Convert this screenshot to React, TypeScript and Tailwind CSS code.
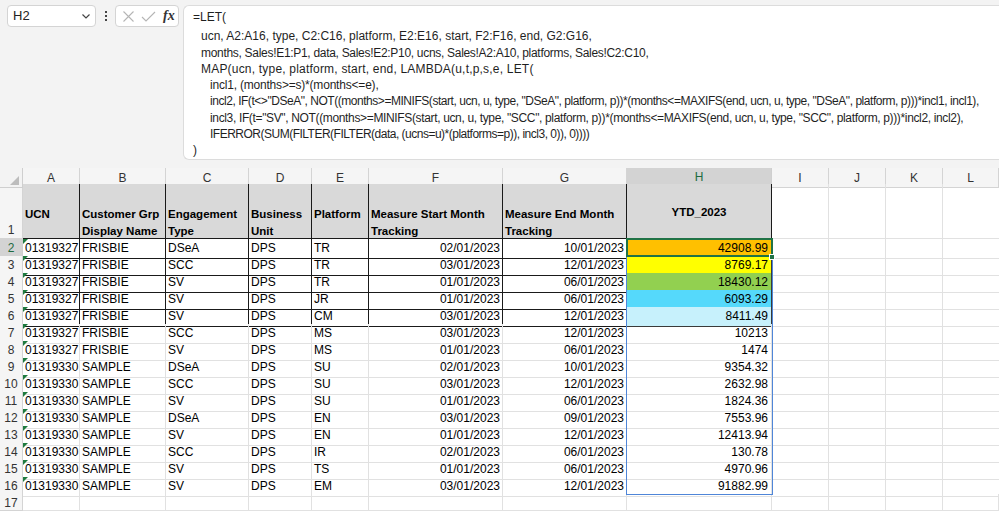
import React from 'react';

const cols = ['A', 'B', 'C', 'D', 'E', 'F', 'G', 'H', 'I', 'J', 'K', 'L'];

const rows = [
    ['01319327', 'FRISBIE', 'DSeA', 'DPS', 'TR', '02/01/2023', '10/01/2023', '42908.99'],
    ['01319327', 'FRISBIE', 'SCC', 'DPS', 'TR', '03/01/2023', '12/01/2023', '8769.17'],
    ['01319327', 'FRISBIE', 'SV', 'DPS', 'TR', '01/01/2023', '06/01/2023', '18430.12'],
    ['01319327', 'FRISBIE', 'SV', 'DPS', 'JR', '01/01/2023', '06/01/2023', '6093.29'],
    ['01319327', 'FRISBIE', 'SV', 'DPS', 'CM', '03/01/2023', '12/01/2023', '8411.49'],
    ['01319327', 'FRISBIE', 'SCC', 'DPS', 'MS', '03/01/2023', '12/01/2023', '10213'],
    ['01319327', 'FRISBIE', 'SV', 'DPS', 'MS', '01/01/2023', '06/01/2023', '1474'],
    ['01319330', 'SAMPLE', 'DSeA', 'DPS', 'SU', '02/01/2023', '10/01/2023', '9354.32'],
    ['01319330', 'SAMPLE', 'SCC', 'DPS', 'SU', '03/01/2023', '12/01/2023', '2632.98'],
    ['01319330', 'SAMPLE', 'SV', 'DPS', 'SU', '01/01/2023', '06/01/2023', '1824.36'],
    ['01319330', 'SAMPLE', 'DSeA', 'DPS', 'EN', '03/01/2023', '09/01/2023', '7553.96'],
    ['01319330', 'SAMPLE', 'SV', 'DPS', 'EN', '01/01/2023', '12/01/2023', '12413.94'],
    ['01319330', 'SAMPLE', 'SCC', 'DPS', 'IR', '02/01/2023', '06/01/2023', '130.78'],
    ['01319330', 'SAMPLE', 'SV', 'DPS', 'TS', '01/01/2023', '06/01/2023', '4970.96'],
    ['01319330', 'SAMPLE', 'SV', 'DPS', 'EM', '03/01/2023', '12/01/2023', '91882.99'],
];

const fills = ['bg-[#ffc000]', 'bg-[#ffff00]', 'bg-[#92d050]', 'bg-[#55d9fb]', 'bg-[#c7f1fc]'];

const headers: [string, string][] = [
    ['UCN', '\u00a0'],
    ['Customer Grp', 'Display Name'],
    ['Engagement', 'Type'],
    ['Business', 'Unit'],
    ['Platform', '\u00a0'],
    ['Measure Start Month', 'Tracking'],
    ['Measure End Month', 'Tracking'],
];

// per-line tracking keeps each line close to the width it has in Excel's font
const formula = [
    { cls: 'pl-0 mb-[3px]', text: '=LET(' },
    { cls: 'pl-2', text: 'ucn, A2:A16, type, C2:C16, platform, E2:E16, start, F2:F16, end, G2:G16,' },
    { cls: 'pl-2 tracking-[-0.3px]', text: 'months, Sales!E1:P1, data, Sales!E2:P10, ucns, Sales!A2:A10, platforms, Sales!C2:C10,' },
    { cls: 'pl-2 tracking-[0.2px]', text: 'MAP(ucn, type, platform, start, end, LAMBDA(u,t,p,s,e, LET(' },
    { cls: 'pl-[17px] tracking-[-0.2px]', text: 'incl1, (months>=s)*(months<=e),' },
    { cls: 'pl-[17px] tracking-[-0.46px]', text: 'incl2, IF(t<>"DSeA", NOT((months>=MINIFS(start, ucn, u, type, "DSeA", platform, p))*(months<=MAXIFS(end, ucn, u, type, "DSeA", platform, p)))*incl1, incl1),' },
    { cls: 'pl-[17px] tracking-[-0.35px]', text: 'incl3, IF(t="SV", NOT((months>=MINIFS(start, ucn, u, type, "SCC", platform, p))*(months<=MAXIFS(end, ucn, u, type, "SCC", platform, p)))*incl2, incl2),' },
    { cls: 'pl-[17px] tracking-[-0.5px]', text: 'IFERROR(SUM(FILTER(FILTER(data, (ucns=u)*(platforms=p)), incl3, 0)), 0))))' },
    { cls: 'pl-0', text: ')' },
];

function FormulaBar() {
    return (
        <div className="h-[168px] bg-[#f3f3f3] flex items-start pt-[5px] pl-[7px] font-['Liberation_Sans',sans-serif]">
            <div className="w-[89px] h-[22px] bg-white border border-[#d4d4d4] rounded-[4px] flex items-center justify-between pl-[5px] pr-[4px] text-[13px] text-[#222]">
                <span>H2</span>
                <svg width="10" height="10" viewBox="0 0 10 10" className="text-[#444]">
                    <path d="M1.5 3.5 L5 7 L8.5 3.5" fill="none" stroke="currentColor" strokeWidth="1.2" />
                </svg>
            </div>
            <div className="w-[19px] h-[22px] flex flex-col items-center justify-center gap-[2px]">
                <span className="w-[2px] h-[2px] bg-[#444]" />
                <span className="w-[2px] h-[2px] bg-[#444]" />
                <span className="w-[2px] h-[2px] bg-[#444]" />
            </div>
            <div className="w-[64px] h-[22px] bg-white border border-[#d4d4d4] rounded-[4px] flex items-center pl-[6px] gap-[6px]">
                <svg width="13" height="13" viewBox="0 0 13 13">
                    <path d="M1.5 1.5 L11.5 11.5 M11.5 1.5 L1.5 11.5" stroke="#b5b5b5" strokeWidth="1.1" />
                </svg>
                <svg width="15" height="13" viewBox="0 0 15 13">
                    <path d="M1 7 L5 11 L14 2" fill="none" stroke="#b5b5b5" strokeWidth="1.1" />
                </svg>
                <span className="font-['Liberation_Serif',serif] italic font-bold text-[14px] text-[#333] leading-none ml-[1px]">fx</span>
            </div>
            <div className="ml-[4px] flex-1 h-[155px] bg-white border border-[#dcdcdc] border-r-0 rounded-l-[6px] pt-[3px] pl-[9px] text-[12px] leading-[16.3px] text-[#1f1f1f] whitespace-nowrap overflow-hidden">
                {formula.map((l, i) => (
                    <div key={i} className={l.cls}>{l.text}</div>
                ))}
            </div>
        </div>
    );
}

function Tri() {
    return <span className="absolute left-0 top-0 w-0 h-0 border-t-[5px] border-t-[#1e7b3f] border-r-[5px] border-r-transparent" />;
}

export default function App() {
    const gridCols = 'grid grid-cols-[23px_57px_86px_83px_63px_57px_134px_124px_145px_57px_57px_57px_56px]';
    return (
        <div className="w-[999px] h-[512px] overflow-hidden bg-white">
            <FormulaBar />
            <div className="relative font-['Liberation_Sans',sans-serif] text-[12px] text-black">
                {/* column letters */}
                <div className={`${gridCols} h-[16px]`}>
                    <div className="relative bg-[#f3f3f3] border-r border-b border-[#cfcfcf]">
                        <span className="absolute right-[3px] bottom-[2px] w-0 h-0 border-l-[9px] border-l-transparent border-b-[9px] border-b-[#bdbdbd]" />
                    </div>
                    {cols.map((c) =>
                        c === 'H' ? (
                            <div key={c} className="bg-[#d3d3d3] border-r border-[#cfcfcf] border-b-2 border-b-[#217346] flex items-center justify-center text-[#1e6b41] text-[12px]">{c}</div>
                        ) : (
                            <div key={c} className="bg-[#f5f5f5] border-r border-b border-[#d4d4d4] flex items-center justify-center text-[#333] text-[12px]">{c}</div>
                        )
                    )}
                </div>
                {/* row 1 headers */}
                <div className={`${gridCols} h-[55px]`}>
                    <div className="bg-[#f5f5f5] border-r border-b border-[#d4d4d4] flex items-end justify-center pb-[1px] text-[#333]">
                        <span className="translate-y-[2px]">1</span>
                    </div>
                    {headers.map(([a, b], i) => (
                        <div key={i} className="bg-[#d9d9d9] border-r border-b border-[#1a1a1a] flex flex-col justify-end pl-[2px] font-bold text-[11.5px] leading-[17px] whitespace-nowrap overflow-hidden">
                            <div className="flex flex-col translate-y-[2px]">
                                <span>{a}</span>
                                <span>{b}</span>
                            </div>
                        </div>
                    ))}
                    <div className="bg-[#d9d9d9] border-r border-b border-[#1a1a1a] flex items-center justify-center font-bold text-[11.5px] pt-[3px]">YTD_2023</div>
                    <div className="border-r border-b border-[#e1e1e1]" />
                    <div className="border-r border-b border-[#e1e1e1]" />
                    <div className="border-r border-b border-[#e1e1e1]" />
                    <div className="border-b border-[#e1e1e1]" />
                </div>
                {/* data rows */}
                {rows.map((r, ri) => {
                    const boxed = ri < 5;
                    const line = boxed ? 'border-[#1a1a1a]' : 'border-[#e1e1e1]';
                    return (
                        <div key={ri} className={`${gridCols} h-[17px] leading-[19px]`}>
                            {ri === 0 ? (
                                <div className="bg-[#d3d3d3] border-r border-b border-[#cfcfcf] text-center text-[#1e6b41]">{ri + 2}</div>
                            ) : (
                                <div className="bg-[#f5f5f5] border-r border-b border-[#d4d4d4] text-center text-[#333]">{ri + 2}</div>
                            )}
                            <div className={`relative border-r border-b ${line} pl-[2px] overflow-hidden`}>
                                <Tri />
                                {r[0]}
                            </div>
                            <div className={`border-r border-b ${line} pl-[2px] overflow-hidden`}>{r[1]}</div>
                            <div className={`border-r border-b ${line} pl-[2px] overflow-hidden`}>{r[2]}</div>
                            <div className={`border-r border-b ${line} pl-[2px] overflow-hidden`}>{r[3]}</div>
                            <div className={`border-r border-b ${line} pl-[2px] overflow-hidden`}>{r[4]}</div>
                            <div className={`border-r border-b ${line} pr-[2px] text-right overflow-hidden`}>{r[5]}</div>
                            <div className={`border-r border-b ${line} pr-[2px] text-right overflow-hidden`}>{r[6]}</div>
                            <div className={`border-r border-b ${boxed ? 'border-[#3a3a3a] ' + fills[ri] : 'border-[#e1e1e1]'} pr-[3px] text-right overflow-hidden`}>{r[7]}</div>
                            <div className="border-r border-b border-[#e1e1e1]" />
                            <div className="border-r border-b border-[#e1e1e1]" />
                            <div className="border-r border-b border-[#e1e1e1]" />
                            <div className="border-b border-[#e1e1e1]" />
                        </div>
                    );
                })}
                {/* row 17 */}
                <div className={`${gridCols} h-[17px] leading-[19px]`}>
                    <div className="bg-[#f5f5f5] border-r border-b border-[#d4d4d4] text-center text-[#333] overflow-hidden">17</div>
                    {cols.map((c) => (
                        <div key={c} className="border-r border-b border-[#e1e1e1]" />
                    ))}
                </div>
                {/* spill range outline */}
                <div className="absolute left-[626px] top-[71px] w-[147px] h-[256px] border border-[#4f86d8] pointer-events-none" />
                {/* active cell */}
                <div className="absolute left-[626px] top-[70px] w-[147px] h-[19px] border-2 border-[#217346] pointer-events-none" />
                <div className="absolute left-[769px] top-[86px] w-[6px] h-[6px] bg-[#217346] border border-white pointer-events-none" />
            </div>
        </div>
    );
}
